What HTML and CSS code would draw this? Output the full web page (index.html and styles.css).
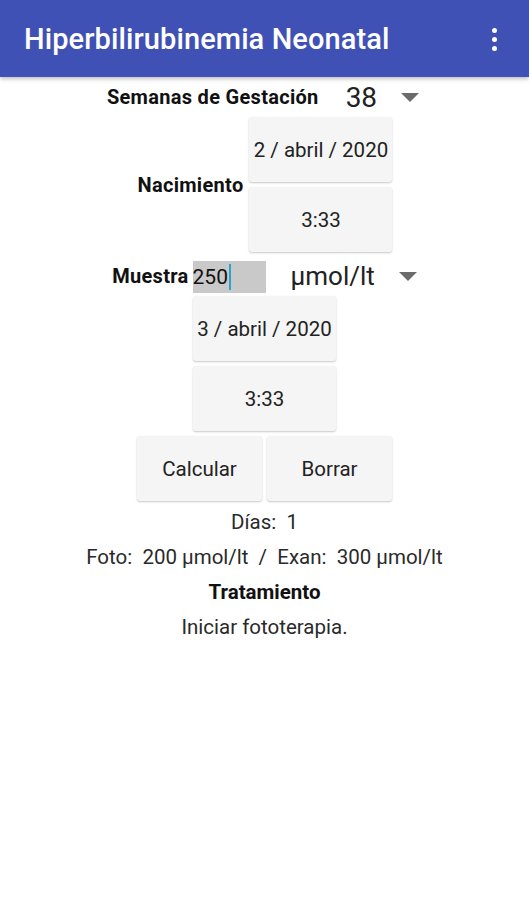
FILE: index.html
```html
<!DOCTYPE html>
<html lang="es">
<head>
    <meta charset="UTF-8">
    <meta name="viewport" content="width=device-width, initial-scale=1.0">
    <title>Hiperbilirubinemia Neonatal</title>
    <link rel="stylesheet" href="styles.css">
</head>
<body>

    <header class="app-bar">
        <h1 class="app-title">Hiperbilirubinemia Neonatal</h1>
        <div class="overflow-menu">
            <span class="dot"></span>
            <span class="dot"></span>
            <span class="dot"></span>
        </div>
    </header>

    <main class="content">
        <div class="row row-gestacion">
            <span class="label">Semanas de Gestación</span>
            <div class="spinner spinner-weeks">
                <span class="spinner-value">38</span>
                <span class="arrow"></span>
            </div>
        </div>

        <div class="row row-nacimiento">
            <span class="label">Nacimiento</span>
            <div class="btn-stack">
                <button class="btn btn-wide">2 / abril / 2020</button>
                <button class="btn btn-wide">3:33</button>
            </div>
        </div>

        <div class="row row-muestra">
            <span class="label">Muestra</span>
            <div class="value-input">250<span class="cursor"></span></div>
            <div class="spinner spinner-units">
                <span class="spinner-value units-value">µmol/lt</span>
                <span class="arrow"></span>
            </div>
        </div>

        <div class="btn-stack btn-stack-muestra">
            <button class="btn btn-wide">3 / abril / 2020</button>
            <button class="btn btn-wide">3:33</button>
        </div>

        <div class="row row-actions">
            <button class="btn btn-action">Calcular</button>
            <button class="btn btn-action">Borrar</button>
        </div>

        <div class="results">
            <p class="result-line">Días:  1</p>
            <p class="result-line">Foto:  200 µmol/lt  /  Exan:  300 µmol/lt</p>
            <p class="result-line result-title">Tratamiento</p>
            <p class="result-line">Iniciar fototerapia.</p>
        </div>
    </main>

</body>
</html>
```

FILE: styles.css
```css
body {
    font-family: Roboto, "Liberation Sans", sans-serif;
    margin: 0;
    padding: 0;
    background-color: #ffffff;
    color: #212121;
}

.app-bar {
    height: 77px;
    background-color: #3f51b5;
    box-shadow: 0 2px 4px rgba(0, 0, 0, 0.25);
    display: flex;
    align-items: center;
    justify-content: space-between;
    padding: 0 32px 0 24px;
}

.app-title {
    margin: 0;
    color: white;
    font-size: 29px;
    font-weight: 500;
    letter-spacing: 0.1px;
}

.overflow-menu {
    display: flex;
    flex-direction: column;
    gap: 4px;
    padding-top: 1px;
}

.dot {
    width: 5px;
    height: 5px;
    border-radius: 50%;
    background-color: white;
}

.content {
    display: flex;
    flex-direction: column;
    align-items: center;
}

.row {
    display: flex;
    align-items: center;
    justify-content: center;
}

.label {
    font-size: 20px;
    font-weight: bold;
    letter-spacing: 0.3px;
    color: #111;
}

.row-gestacion {
    height: 40px;
}

.spinner {
    display: flex;
    align-items: center;
}

.spinner-value {
    font-size: 28px;
    color: #222;
}

.units-value {
    font-size: 26px;
}

.arrow {
    width: 0;
    height: 0;
    border-left: 9px solid transparent;
    border-right: 9px solid transparent;
    border-top: 9px solid #6b6b6b;
}

.spinner-weeks {
    margin-left: 27px;
    gap: 24px;
    padding-right: 3px;
}

.row-nacimiento {
    gap: 6px;
    padding-left: 1px;
}

.btn-stack {
    display: flex;
    flex-direction: column;
    gap: 5px;
}

.btn {
    height: 65px;
    padding: 0;
    background-color: #f5f5f5;
    border: none;
    border-radius: 3px;
    box-shadow: 0 1px 2px rgba(0, 0, 0, 0.22);
    font-family: Roboto, "Liberation Sans", sans-serif;
    font-size: 20.5px;
    color: #222;
}

.btn-wide {
    width: 143px;
}

.row-muestra {
    height: 40px;
    margin-top: 4px;
    gap: 4px;
}

.value-input {
    width: 73px;
    height: 32px;
    background-color: #c9c9c9;
    font-size: 21px;
    color: #111;
    display: flex;
    align-items: center;
    margin-top: 2px;
}

.cursor {
    width: 2px;
    height: 26px;
    margin-left: 1px;
    background-color: #2aa5c8;
}

.spinner-units {
    margin-left: 21px;
    gap: 24px;
}

.btn-stack-muestra {
    margin-bottom: 5px;
}

.row-actions {
    gap: 5px;
}

.btn-action {
    width: 125px;
}

.results {
    margin-top: 4px;
    text-align: center;
}

.result-line {
    margin: 0;
    height: 35px;
    line-height: 35px;
    font-size: 20.5px;
    color: #2a2a2a;
    white-space: pre;
}

.result-title {
    font-weight: bold;
    color: #111;
}
```
